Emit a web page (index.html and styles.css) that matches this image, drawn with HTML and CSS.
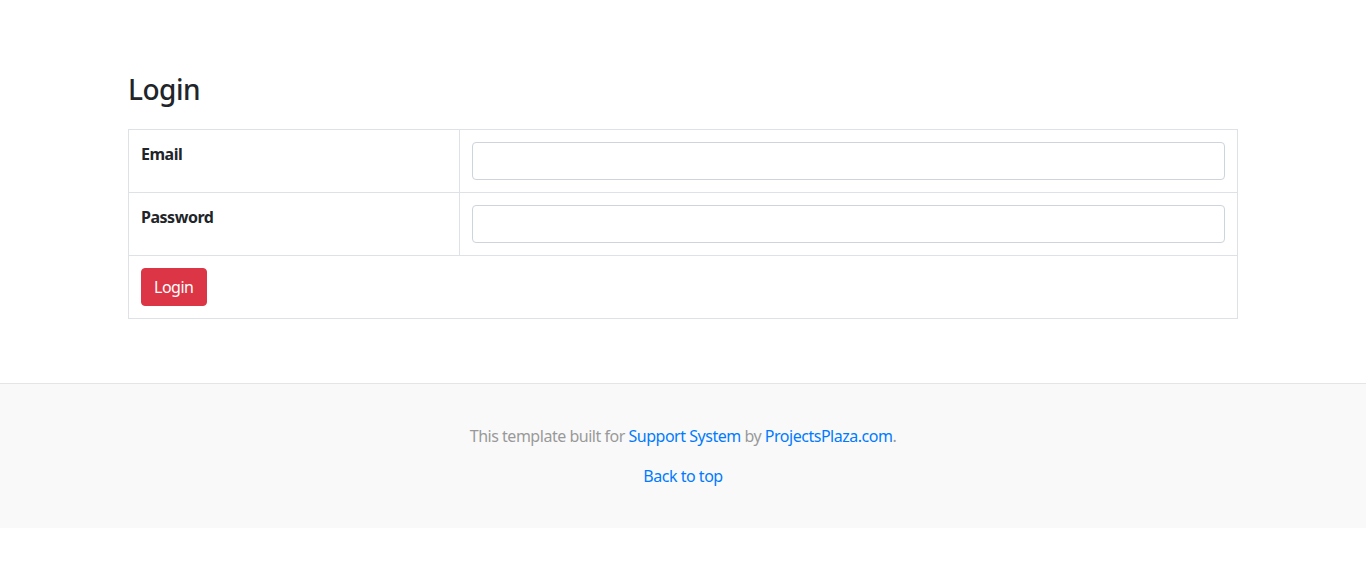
FILE: index.html
```html
<!DOCTYPE html>
<html lang="en">
<head>
<meta charset="utf-8">
<title>Login</title>
<link rel="stylesheet" href="styles.css">
</head>
<body>
<main class="main">
  <div class="container">
    <h3 class="title">Login</h3>
    <table class="table">
      <tr>
        <th class="label">Email</th>
        <td><input class="form-control" type="email"></td>
      </tr>
      <tr>
        <th class="label">Password</th>
        <td><input class="form-control" type="password"></td>
      </tr>
      <tr>
        <td colspan="2"><button class="btn-danger" type="button">Login</button></td>
      </tr>
    </table>
  </div>
</main>
<footer class="footer">
  <p class="footer-line">This template built for <a href="#">Support System</a> by <a href="#">ProjectsPlaza.com</a>.</p>
  <p class="footer-line"><a href="#">Back to top</a></p>
</footer>
</body>
</html>
```
FILE: styles.css
```css
* { box-sizing: border-box; }
html, body { margin: 0; padding: 0; }
body {
  font-family: "Noto Sans", "Open Sans", Arial, sans-serif;
  font-size: 16px;
  line-height: 1.5;
  letter-spacing: -0.03em;
  color: #212529;
  background: #fff;
}
.main { padding: 73px 0 48px; }
.container {
  max-width: 1140px;
  margin: 0 auto;
  padding: 0 15px;
}
.title {
  margin: 0 0 22px;
  font-size: 28px;
  font-weight: 500;
  line-height: 1.2;
}
.table {
  width: 100%;
  border-collapse: collapse;
  margin-bottom: 16px;
  border: 1px solid #dee2e6;
}
.table th, .table td {
  border: 1px solid #dee2e6;
  padding: 12px;
  vertical-align: top;
  text-align: left;
}
.label { width: 331px; font-weight: 700; }
.form-control {
  display: block;
  width: 100%;
  height: 38px;
  padding: 6px 12px;
  font: inherit;
  color: #495057;
  background: #fff;
  border: 1px solid #ced4da;
  border-radius: 4px;
}
.btn-danger {
  display: inline-block;
  font: inherit;
  letter-spacing: inherit;
  color: #fff;
  background: #dc3545;
  border: 1px solid #dc3545;
  border-radius: 4px;
  padding: 6px 12px;
  line-height: 1.5;
  height: 38px;
}
.footer {
  background: #f9f9f9;
  border-top: 1px solid #e5e5e5;
  padding: 40px 0;
  text-align: center;
  color: #999;
}
.footer-line { margin: 0; }
.footer-line + .footer-line { margin-top: 16px; }
.footer a { color: #007bff; text-decoration: none; }
```
